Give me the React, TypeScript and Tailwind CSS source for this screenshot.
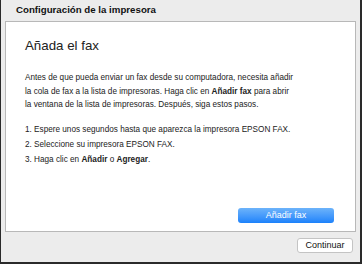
export default function App() {
  return (
    <div
      className="w-[362px] h-[264px] bg-[#2a2a2a] pl-px pr-[2px] pb-[2px]"
      style={{ fontFamily: '"Liberation Sans", Arial, sans-serif' }}
    >
      <div className="flex h-full flex-col bg-[#ececec] px-[4px]">
        {/* Title */}
        <div className="h-[21px] pl-[11px] pt-[4px] text-[9.7px] font-bold leading-[12px] text-[#111]">
          Configuración de la impresora
        </div>

        {/* Panel */}
        <div className="flex h-[211px] flex-col border border-[#b8b8b8] bg-white pl-[19px] pr-[20px] pt-[15px]">
          <h1 className="text-[13.3px] leading-[17px] text-[#222]">Añada el fax</h1>

          <p className="mt-[17px] text-[8.2px] leading-[13.5px] text-[#222]">
            Antes de que pueda enviar un fax desde su computadora, necesita añadir
            <br />
            la cola de fax a la lista de impresoras. Haga clic en <b>Añadir fax</b> para abrir
            <br />
            la ventana de la lista de impresoras. Después, siga estos pasos.
          </p>

          <ol className="mt-[11px] flex flex-col gap-[1.5px] text-[8.2px] leading-[13.5px] text-[#222]">
            <li>1. Espere unos segundos hasta que aparezca la impresora EPSON FAX.</li>
            <li>2. Seleccione su impresora EPSON FAX.</li>
            <li>
              3. Haga clic en <b>Añadir</b> o <b>Agregar</b>.
            </li>
          </ol>

          <div className="mt-auto mb-[8px] flex justify-end pr-[1px]">
            <button className="h-[15px] w-[96px] rounded-[3px] bg-gradient-to-b from-[#6cb3fa] to-[#1a82fb] text-[9px] leading-[15px] text-white">
              Añadir fax
            </button>
          </div>
        </div>

        {/* Footer */}
        <div className="flex flex-1 items-start justify-end pt-[6px] pr-[3px]">
          <button className="h-[15px] w-[56px] rounded-[3px] border border-[#c4c4c4] bg-white text-[9px] leading-[13px] text-[#111]">
            Continuar
          </button>
        </div>
      </div>
    </div>
  );
}
